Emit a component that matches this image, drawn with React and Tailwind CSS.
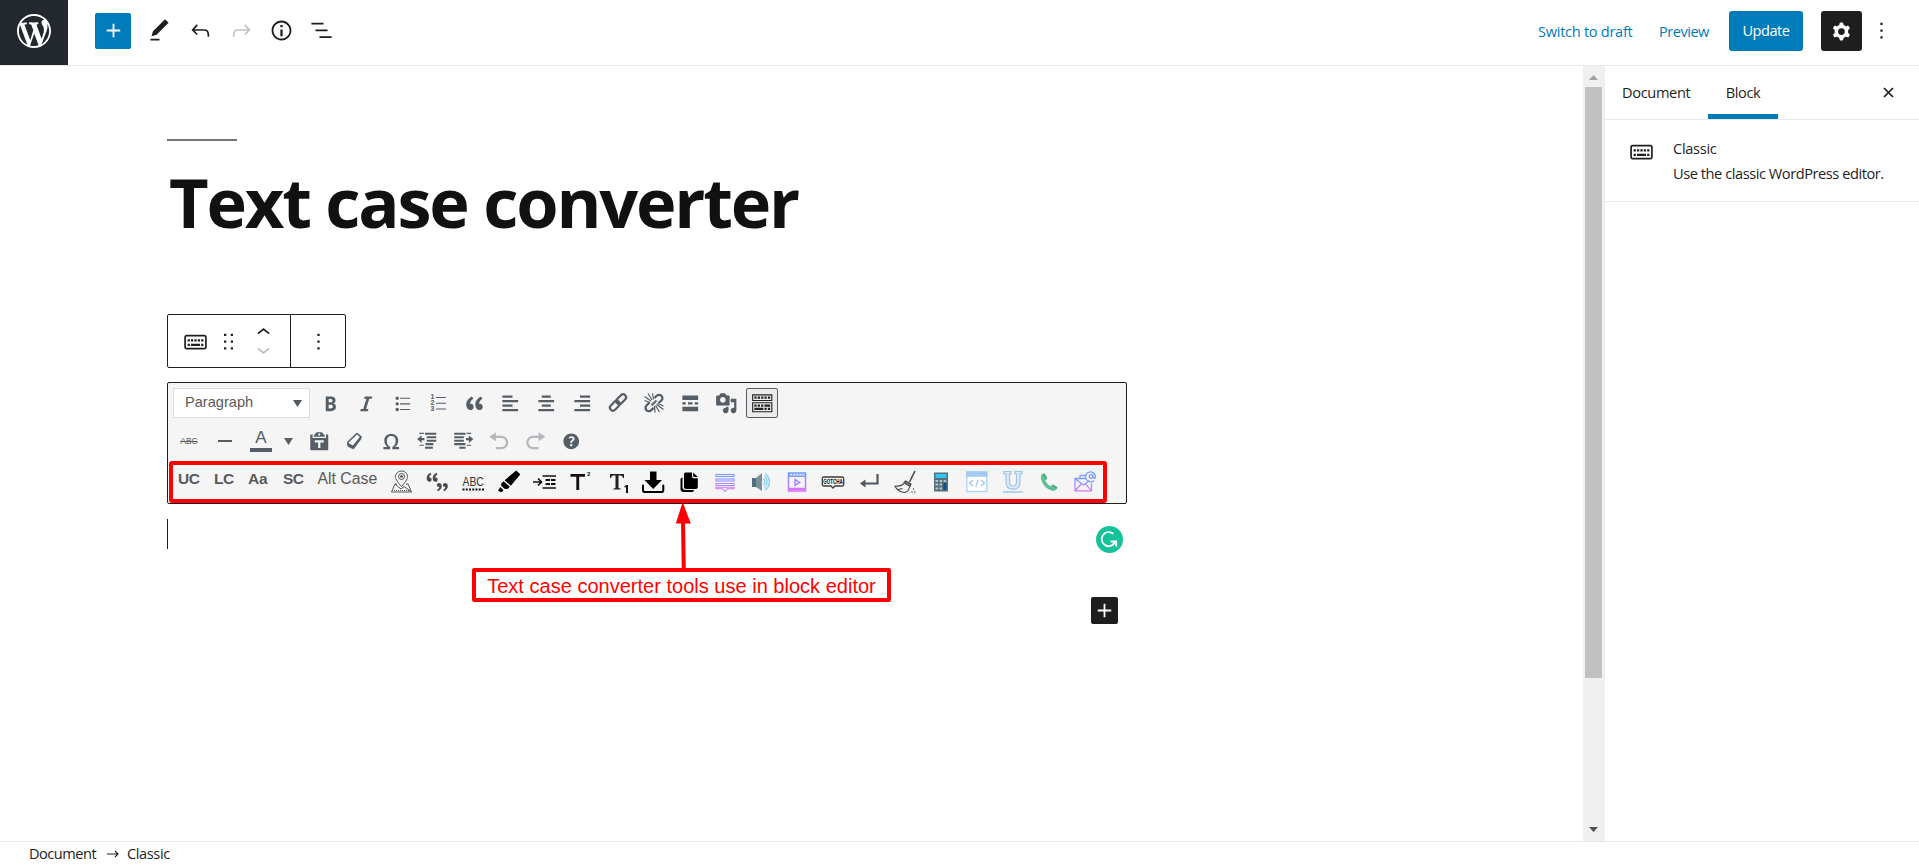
import React from "react";

const P = ({ d, size = 27, vb = "0 0 24 24", className = "" }) => (
  <svg width={size} height={size} viewBox={vb} className={"shrink-0 " + className} fill="currentColor" fillRule="evenodd">
    <path d={d} />
  </svg>
);

const wp =
  "M20 10c0-5.51-4.49-10-10-10C4.48 0 0 4.49 0 10c0 5.52 4.48 10 10 10 5.51 0 10-4.48 10-10zM7.78 15.37L4.37 6.22c.55-.02 1.17-.08 1.17-.08.5-.06.44-1.13-.06-1.11 0 0-1.45.11-2.37.11-.18 0-.37 0-.58-.01C4.12 2.69 6.87 1.11 10 1.11c2.33 0 4.45.87 6.05 2.34-.68-.11-1.65.39-1.65 1.58 0 .74.45 1.36.9 2.1.35.61.55 1.36.55 2.46 0 1.49-1.4 5-1.4 5l-3.03-8.37c.54-.02.82-.17.82-.17.5-.05.44-1.25-.06-1.22 0 0-1.44.12-2.38.12-.87 0-2.33-.12-2.33-.12-.5-.03-.56 1.2-.06 1.22l.92.08 1.26 3.41zM17.41 10c.24-.64.74-1.87.43-4.25.7 1.29 1.05 2.71 1.05 4.25 0 3.29-1.73 6.24-4.4 7.78.97-2.59 1.94-5.2 2.92-7.78zM6.1 18.09C3.12 16.65 1.11 13.53 1.11 10c0-1.3.23-2.48.72-3.59C3.25 10.3 4.67 14.2 6.1 18.09zm4.03-6.63l2.58 6.98c-.86.29-1.76.45-2.71.45-.79 0-1.57-.11-2.29-.33.81-2.38 1.62-4.74 2.42-7.1z";
const plus = "M18 11.2h-5.2V6h-1.6v5.2H6v1.6h5.2V18h1.6v-5.2H18z";
const pencil = "M20.1 5.1L16.9 2 6.2 12.7l-1.3 4.4 4.5-1.3L20.1 5.1zM4 20.8h8v-1.5H4v1.5z";
const undo =
  "M18.3 11.7c-.6-.6-1.4-.9-2.3-.9H6.7l2.9-3.3-1.1-1-4.5 5L8.5 16l1-1-2.7-2.7H16c.5 0 .9.2 1.3.5 1 1 1 3.4 1 4.5v.3h1.5v-.2c0-1.5 0-4.3-1.5-5.7z";
const redo =
  "M15.6 6.5l-1.1 1 2.9 3.3H8c-.9 0-1.7.3-2.3.9-1.4 1.5-1.4 4.2-1.4 5.6v.2h1.5v-.3c0-1.1 0-3.5 1-4.5.3-.3.7-.5 1.3-.5h9.2L14.5 15l1.1 1.1 4.6-4.6-4.6-5z";
const info =
  "M12 3.2c-4.8 0-8.8 3.9-8.8 8.8 0 4.8 3.9 8.8 8.8 8.8 4.8 0 8.8-3.9 8.8-8.8 0-4.8-4-8.8-8.8-8.8zm0 16c-4 0-7.2-3.3-7.2-7.2C4.8 8 8 4.8 12 4.8s7.2 3.3 7.2 7.2c0 4-3.2 7.2-7.2 7.2zM11 17h2v-6h-2v6zm0-8h2V7h-2v2z";
const outline = "M13.8 5.2H3v1.5h10.8V5.2zm-3.6 12v1.5H21v-1.5H10.2zm7.2-6H6.6v1.5h10.8v-1.5z";
const more = "M13 19h-2v-2h2v2zm0-6h-2v-2h2v2zm0-6h-2V5h2v2z";
const keyboard =
  "M20 6H4c-1.1 0-2 .9-2 2v9c0 1.1.9 2 2 2h16c1.1 0 2-.9 2-2V8c0-1.1-.9-2-2-2zm.5 11c0 .3-.2.5-.5.5H4c-.3 0-.5-.2-.5-.5V8c0-.3.2-.5.5-.5h16c.3 0 .5.2.5.5v9zM10 10H8v2h2v-2zm-5 2h2v-2H5v2zm8-2h-2v2h2v-2zm-5 6h8v-2H8v2zm6-4h2v-2h-2v2zm3 0h2v-2h-2v2zm0 4h2v-2h-2v2zM5 16h2v-2H5v2z";
const cog =
  "M10.289 4.836A1 1 0 0111.275 4h1.306a1 1 0 01.987.836l.244 1.466c.787.26 1.503.679 2.108 1.218l1.393-.522a1 1 0 011.216.437l.653 1.13a1 1 0 01-.23 1.273l-1.148.944a6.025 6.025 0 010 2.435l1.149.946a1 1 0 01.23 1.272l-.653 1.13a1 1 0 01-1.216.437l-1.394-.522c-.605.54-1.32.958-2.108 1.218l-.244 1.466a1 1 0 01-.987.836h-1.306a1 1 0 01-.986-.836l-.244-1.466a5.995 5.995 0 01-2.108-1.218l-1.394.522a1 1 0 01-1.217-.436l-.653-1.131a1 1 0 01.23-1.272l1.149-.946a6.026 6.026 0 010-2.435l-1.148-.944a1 1 0 01-.23-1.272l.653-1.131a1 1 0 011.217-.437l1.393.522a5.994 5.994 0 012.108-1.218l.244-1.466zM14.929 12a3 3 0 11-6 0 3 3 0 016 0z";
const chevUp = "M6.5 12.4L12 8l5.5 4.4-.9 1.2L12 10l-4.5 3.6-1-1.2z";
const chevDown = "M17.5 11.6L12 16l-5.5-4.4.9-1.2L12 14l4.5-3.6 1 1.2z";
const drag = "M8 7h2V5H8v2zm0 6h2v-2H8v2zm0 6h2v-2H8v2zm6-14v2h2V5h-2zm0 8h2v-2h-2v2zm0 6h2v-2h-2v2z";

const bold =
  "M6 4v13h4.54c1.37 0 2.46-.33 3.26-1 .8-.66 1.2-1.58 1.2-2.77 0-.84-.17-1.51-.51-2.01s-.9-.85-1.67-1.03v-.09c.57-.1 1.02-.4 1.36-.9s.51-1.13.51-1.91c0-1.14-.39-1.98-1.17-2.5C12.75 4.26 11.5 4 9.78 4H6zm2.57 5.15V6.26h1.36c.73 0 1.27.11 1.61.32.34.22.51.58.51 1.07 0 .54-.16.92-.47 1.15s-.82.35-1.51.35h-1.5zm0 2.19h1.6c1.44 0 2.16.53 2.16 1.61 0 .6-.17 1.05-.51 1.34s-.86.43-1.57.43H8.57v-3.38z";
const italic = "M14.78 6h-2.13l-2.8 9h2.12l-.62 2H4.6l.62-2h2.14l2.8-9H8.03l.62-2h6.75z";
const ul =
  "M5.5 7C4.67 7 4 6.33 4 5.5 4 4.68 4.67 4 5.5 4 6.32 4 7 4.68 7 5.5 7 6.33 6.32 7 5.5 7zM8 5h9v1H8V5zm-2.5 7c-.83 0-1.5-.67-1.5-1.5C4 9.68 4.67 9 5.5 9c.82 0 1.5.68 1.5 1.5 0 .83-.68 1.5-1.5 1.5zM8 10h9v1H8v-1zm-2.5 7c-.83 0-1.5-.67-1.5-1.5 0-.82.67-1.5 1.5-1.5.82 0 1.5.68 1.5 1.5 0 .83-.68 1.5-1.5 1.5zM8 15h9v1H8v-1z";
const quote =
  "M9.49 13.22c0-.74-.2-1.38-.61-1.9-.62-.78-1.83-.88-2.53-.72-.29-1.65 1.11-3.75 2.92-4.65L7.88 4c-2.73 1.3-5.42 4.28-4.96 8.05C3.21 14.43 4.59 16 6.54 16c.85 0 1.56-.25 2.12-.75s.83-1.18.83-2.03zm8.05 0c0-.74-.2-1.38-.61-1.9-.63-.78-1.83-.88-2.53-.72-.29-1.65 1.11-3.75 2.92-4.65L15.93 4c-2.73 1.3-5.41 4.28-4.95 8.05.29 2.38 1.66 3.95 3.61 3.95.85 0 1.56-.25 2.12-.75s.83-1.18.83-2.03z";
const alignLeft = "M12 5V3H3v2h9zm5 4V7H3v2h14zm-5 4v-2H3v2h9zm5 4v-2H3v2h14z";
const alignCenter = "M14 5V3H6v2h8zm3 4V7H3v2h14zm-3 4v-2H6v2h8zm3 4v-2H3v2h14z";
const alignRight = "M17 5V3H8v2h9zm0 4V7H3v2h14zm0 4v-2H8v2h9zm0 4v-2H3v2h14z";
const moreTag = "M17 7V3H3v4h14zM6 11V9H3v2h3zm6 0V9H8v2h4zm5 0V9h-3v2h3zm0 6v-4H3v4h14z";
const media =
  "M13 11V4c0-.55-.45-1-1-1h-1.67L9 1H5L3.67 3H2c-.55 0-1 .45-1 1v7c0 .55.45 1 1 1h10c.55 0 1-.45 1-1zM7 4.5c1.38 0 2.5 1.12 2.5 2.5S8.38 9.5 7 9.5 4.5 8.38 4.5 7 5.62 4.5 7 4.5zM14 6h5v10.5c0 1.38-1.12 2.5-2.5 2.5S14 17.88 14 16.5s1.12-2.5 2.5-2.5c.17 0 .34.02.5.05V9h-3V6zm-4 8.05V13h2v3.5c0 1.38-1.12 2.5-2.5 2.5S7 17.88 7 16.5 8.12 14 9.5 14c.17 0 .34.02.5.05z";
const sink =
  "M19 2v6H1V2h18zm-1 5V3H2v4h16zM5 4v2H3V4h2zm3 0v2H6V4h2zm3 0v2H9V4h2zm3 0v2h-2V4h2zm3 0v2h-2V4h2zm2 5v9H1V9h18zm-1 8v-7H2v7h16zM5 11v2H3v-2h2zm3 0v2H6v-2h2zm3 0v2H9v-2h2zm6 0v2h-5v-2h5zm-6 3v2H3v-2h8zm3 0v2h-2v-2h2zm3 0v2h-2v-2h2z";
const paste =
  "M12.38 2L15 5v1H5V5l2.64-3h4.74zM10 5c.55 0 1-.44 1-1 0-.55-.45-1-1-1s-1 .45-1 1c0 .56.45 1 1 1zm5.45-1H17c.55 0 1 .45 1 1v12c0 .56-.45 1-1 1H3c-.55 0-1-.44-1-1V5c0-.55.45-1 1-1h1.55L4 4.63V7h12V4.63zM14 11V9H6v2h3v5h2v-5h3z";
const omega =
  "M10 5.4c1.27 0 2.24.36 2.91 1.08.66.71 1 1.76 1 3.13 0 1.28-.23 2.37-.69 3.27-.47.89-1.27 1.52-2.22 2.12v2h6v-2h-3.69c.92-.64 1.62-1.34 2.12-2.34.49-1.01.74-2.13.74-3.35 0-1.78-.55-3.19-1.65-4.22S11.92 3.54 10 3.54s-3.43.53-4.52 1.57c-1.1 1.04-1.65 2.44-1.65 4.2 0 1.21.24 2.31.73 3.33.48 1.01 1.19 1.71 2.1 2.36H3v2h6v-2c-.98-.64-1.8-1.28-2.24-2.17-.45-.89-.67-1.96-.67-3.22 0-1.37.33-2.41 1-3.13C7.75 5.76 8.72 5.4 10 5.4z";
const undoArrow = "M12 5H7V2L1 6l6 4V7h5c2.2 0 4 1.8 4 4s-1.8 4-4 4H7v2h5c3.3 0 6-2.7 6-6s-2.7-6-6-6z";
const redoArrow = "M8 5h5V2l6 4-6 4V7H8c-2.2 0-4 1.8-4 4s1.8 4 4 4h5v2H8c-3.3 0-6-2.7-6-6s2.7-6 6-6z";
const help =
  "M17 10c0-3.87-3.14-7-7-7-3.87 0-7 3.13-7 7s3.13 7 7 7c3.86 0 7-3.13 7-7zm-6.3 1.48H9.14v-.43c0-.38.08-.7.24-.98s.46-.57.88-.89c.41-.29.68-.53.81-.71.14-.18.2-.39.2-.62 0-.25-.09-.44-.28-.58-.19-.13-.45-.19-.79-.19-.58 0-1.25.19-2 .57l-.64-1.28c.87-.49 1.8-.74 2.77-.74.81 0 1.45.2 1.92.58.48.39.71.91.71 1.55 0 .43-.09.8-.29 1.11-.19.32-.57.67-1.11 1.06-.38.28-.61.49-.71.63-.1.15-.15.34-.15.57v.35zm-1.47 2.74c-.18-.17-.27-.42-.27-.73 0-.33.08-.58.26-.75s.43-.25.77-.25c.32 0 .57.09.75.26s.27.42.27.74c0 .3-.09.55-.27.72-.18.18-.43.27-.75.27-.33 0-.58-.09-.76-.26z";
const outdent = "M1 8L5 4.800v2.200H7.500v2.200H5V11.500zM3 2.500h4v1H3zM3 13h4v1H3zM8 2.500h10v1.800H8zM9.500 5.500h8.500v1.900H9.500zM9.500 8.600h8.500v1.900H9.500zM8.500 11.600h7v1.900h-7zM8 14.800h7v1.800H8z";
const indent = "M19 8L15 4.800v2.200H12.500v2.200H15V11.500zM13 2.500h4v1h-4zM13 13h4v1h-4zM2 2.500h10v1.800H2zM2 5.500h8.500v1.900H2zM2 8.600h8.500v1.900H2zM2 11.600h10v1.900H2zM6.500 14.800h5.500v1.800H6.500z";

const D = ({ d, className }) => <P d={d} size={22.5} vb="0 0 20 20" className={className} />;
const Cell = ({ children, className = "" }) => (
  <div className={"flex h-9 w-9 shrink-0 items-center justify-center " + className}>{children}</div>
);
const S = ({ children, ...p }) => (
  <svg width="24" height="24" viewBox="0 0 24 24" fill="none" className="shrink-0 overflow-visible" {...p}>
    {children}
  </svg>
);
const HBtn = ({ d, className = "" }) => (
  <div className={"flex h-[41px] w-[40.5px] items-center justify-center " + className}>
    <P d={d} />
  </div>
);

const OrderedList = () => (
  <S>
    <path d="M10 6.5h10M10 12.300h10M10 18h10" stroke="currentColor" strokeWidth="1.100" />
    <g fill="currentColor" className="text-[7px] font-bold" fontFamily="Liberation Sans, sans-serif">
      <text x="4.500" y="8.400">1</text>
      <text x="4.500" y="14.400">2</text>
      <text x="4.500" y="20.400">3</text>
    </g>
  </S>
);
const Link = () => (
  <S stroke="currentColor" strokeWidth="2.200">
    <rect x="-5.600" y="-3" width="11.200" height="6" rx="3" transform="translate(15.200 8.200) rotate(-45)" />
    <rect x="-5.600" y="-3" width="11.200" height="6" rx="3" transform="translate(8.800 14.800) rotate(-45)" />
  </S>
);
const Unlink = () => (
  <S stroke="currentColor">
    <path d="M12.500 7l2.200-2.200a3.300 3.300 0 0 1 4.700 0 3.300 3.300 0 0 1 0 4.700L16.500 12M7.500 11.500l-3 3a3.300 3.300 0 0 0 0 4.700 3.300 3.300 0 0 0 4.700 0l2.500-2.500" strokeWidth="2.300" />
    <path d="M9 10L2.500 5.500M10 9L6 2.500M11.500 8.500L10.500 2.500M8 11.500L2.500 9.500M14.500 13.500l7 5M13.500 14.500l4 6.500M12.500 15l.5 6.500M15.500 12.500l6 2.500" strokeWidth="1.200" />
    <path d="M9.500 14.500l5-5" strokeWidth="1.800" />
  </S>
);

const Pin = () => (
  <S stroke="#555" strokeWidth="1">
    <path d="M12.500 16.500C9 12.500 6.500 9.500 6.500 6.500a6 5.500 0 0 1 12 0c0 3-2.500 6-6 10z" />
    <circle cx="12.500" cy="6.500" r="3" />
    <circle cx="12.500" cy="6.500" r="1" fill="#555" />
    <path d="M8 14H6l-3.500 8h20L19 14h-2M6 14l6 5 3-2.500 7 5" />
    <path d="M5 20.500h15" strokeDasharray="1 1" />
  </S>
);
const Quotes2 = () => (
  <S fill="#4a4a4a">
    <path d={quote} transform="translate(-.5 -.3) scale(.75)" />
    <path d={quote} transform="translate(25 24) rotate(180) scale(.75 .68)" />
  </S>
);
const AbcDots = () => (
  <S>
    <text fill="#333" fontSize="13" transform="translate(1.500 16) scale(.8 1)" fontFamily="Liberation Sans, sans-serif">ABC</text>
    <path d="M1.500 19.500h21.500" stroke="#111" strokeWidth="2" strokeDasharray="2 1.250" />
  </S>
);
const Marker = () => (
  <S fill="#000">
    <path d="M20 1.200l2.700 2.500c.5.500.4 1-.1 1.600l-8.800 10.500-6.200-5.600L18.300 1.300c.5-.5 1.100-.6 1.700-.1z" />
    <path d="M6.600 11.200l6.200 5.600-2.200 2.200-3.200-.2L4 15.600l.5-2.400z" />
    <path d="M3.200 17l3.200 3-1.600 2.300L1 21z" />
  </S>
);
const IndentArrow = () => (
  <S stroke="#111">
    <path d="M0 12h8M5 8.500l3.500 3.500L5 15.500" strokeWidth="1.700" />
    <path d="M9.500 6H23M9.500 18H23" strokeWidth="1.600" />
    <path d="M12.500 10H23M12.500 14H23" strokeWidth="1.800" strokeDasharray="4.500 1" />
  </S>
);
const Super = () => (
  <S fill="#111">
    <path d="M1.500 4h14.500v2.800h-5.800V20H7.300V6.800H1.500z" />
    <text x="18" y="5.500" fontSize="6" fontWeight="700" fontFamily="Liberation Sans, sans-serif">2</text>
  </S>
);
const Sub = () => (
  <S>
    <g transform="translate(2 0)">
      <path d="M3 4h14v4h-1.100c-.3-1.700-1-2.500-2.400-2.500h-2V17c0 1.200.5 1.500 2.200 1.600v1H6.300v-1C8 18.500 8.500 18.200 8.500 17V5.500h-2C5.100 5.500 4.400 6.300 4.100 8H3z" fill="#222" />
      <path d="M17.500 16l2.200-1h1.300v8h-2v-6l-1.500.6z" fill="#111" />
    </g>
  </S>
);
const Download = () => (
  <S fill="#000">
    <path d="M9 1.500h6.500V10H21l-8.800 9L3.500 10H9z" />
    <path d="M2 15.500v4.700c0 1.300.6 1.800 1.800 1.800h16.700c1.200 0 1.800-.5 1.800-1.800v-4.700" fill="none" stroke="#000" strokeWidth="2" strokeLinecap="round" />
  </S>
);
const Copy = () => (
  <S>
    <path d="M3.500 9.500a2 2 0 0 1 2-2V17a3 3 0 0 0 3 3H17c0 1.200-.8 2-2 2H6.500a3 3 0 0 1-3-3z" fill="#000" />
    <path d="M8.500 2.500H15v4c0 1 .7 1.800 1.800 1.800h4V17c0 1.200-.7 2-2 2H9c-1.300 0-2-.8-2-2V4.500c0-1.200.6-2 1.500-2z" fill="#000" />
    <path d="M16.200 2.500l4.600 4.600h-3.500c-.7 0-1.100-.4-1.100-1.100z" fill="#000" />
  </S>
);
const Comments = () => (
  <S strokeWidth="1.100">
    <rect x="3" y="4.500" width="18" height="2" stroke="#7f9dff" />
    <rect x="3" y="9" width="18" height="2" stroke="#9490ff" />
    <path d="M3 13.500h18v2H3z" stroke="#a988fb" />
    <path d="M3 18.800h6.500l2.500 2.700 2.500-2.700H21v-1.500H3z" stroke="#d07bfa" />
  </S>
);
const Speaker = () => (
  <S>
    <path d="M3 8h4v9H3z" fill="#52717e" />
    <path d="M7 8l6-5v18l-6-4z" fill="#78909c" />
    <path d="M14.500 9a4 4 0 0 1 0 6M15.500 6.500a7 7 0 0 1 0 11M16 4a9.500 9.500 0 0 1 0 16" stroke="#8fd3f2" strokeWidth="1.500" />
  </S>
);
const Video = () => (
  <S strokeWidth="1.500">
    <defs>
      <linearGradient id="vid" x1="0" y1="0" x2="0" y2="1">
        <stop offset="0" stopColor="#6f9bff" />
        <stop offset="1" stopColor="#dc72f8" />
      </linearGradient>
    </defs>
    <path d="M3.500 3h17v18h-17zM3.500 6.300h17M3.500 18.600h17M10 9.500v6l4.700-3z" stroke="url(#vid)" />
    <path d="M4 4.600h16" stroke="#7fa5ff" strokeDasharray="1.500 1.500" />
    <path d="M3.500 19.800h17" stroke="#dc72f8" />
  </S>
);
const Gotcha = () => (
  <S stroke="#3b3b3b">
    <path d="M3 7h18c1 0 1.700.6 1.700 1.600v5.800c0 1-.7 1.600-1.700 1.600h-7l-2 2-2-2H3c-1 0-1.700-.6-1.700-1.600V8.600C1.300 7.600 2 7 3 7z" strokeWidth="1.300" />
    <text fill="#111" stroke="none" fontSize="6.800" fontWeight="700" transform="translate(2.300 14) scale(.66 1)" fontFamily="Liberation Sans, sans-serif">GOTCHA</text>
  </S>
);
const Return = () => (
  <S>
    <path d="M20.500 4v9.500H7" stroke="#4f5660" strokeWidth="2.200" />
    <path d="M3 13.500l5.500-4v8z" fill="#4f5660" />
  </S>
);
const Broom = () => (
  <S stroke="#444" strokeWidth="1.100">
    <path d="M22 1L16.500 12" strokeWidth="1.600" />
    <path d="M12.500 11l5.500 3-1 2.500-6-3.800z" fill="#777" />
    <path d="M11 13.500c-2 2-5.500 2.800-9 2.800 1.500 3 5 6 10 6.200 2.500-1 4-3 4.500-5.500M5.500 19.500l4-1" />
    <path d="M18.500 22h1M21.500 22h1M20 19h1" strokeWidth="1.500" />
  </S>
);
const Calculator = () => (
  <S>
    <rect x="5" y="2.500" width="14" height="19" fill="#546e7a" />
    <rect x="6.500" y="4" width="11" height="4" fill="#35c3ef" />
    <path d="M6.500 10h2.600v2H6.500zM10.500 10h2.600v2h-2.600zM14.600 10h2.600v2h-2.600zM6.500 13.500h2.600v2H6.500zM10.500 13.500h2.600v2h-2.600zM6.500 17.500h2.600v2H6.500zM10.500 17.500h2.600v2h-2.600z" fill="#b4c6cf" />
    <path d="M14.400 13.300h3v6.500h-3z" fill="#0b4f8f" />
  </S>
);
const Code = () => (
  <S>
    <rect x="1.800" y="2" width="20" height="19.500" fill="#fff" stroke="#b5d3f2" strokeWidth="1.400" />
    <path d="M1.200 1.300h21.200v5.500H1.200z" fill="#a4caf2" />
    <path d="M8 10l-3.500 3 3.500 3M16 10l3.500 3-3.500 3M13.200 9.500l-2.400 7" stroke="#9fc6ee" strokeWidth="1.300" />
  </S>
);
const Under = () => (
  <S stroke="#9fc4e8" strokeWidth="1.200">
    <path d="M3 1.500h7v2.300H8.500V12c0 2.500 1.300 4 3.500 4s3.500-1.500 3.500-4V3.800H14V1.500h7v2.300h-2V12c0 4.500-2.500 7.200-7 7.200S5 16.500 5 12V3.800H3z" fill="#dcebf9" />
    <path d="M2 22h20" strokeWidth="1.500" />
  </S>
);
const Phone = () => (
  <S>
    <path d="M6.500 3.500C4.500 4 3.500 6 4 8.500c1.200 6 5.500 10.500 10.500 12 2.500.7 5-.2 5.800-2.200.3-.8.100-1.200-.5-1.600l-3.300-2c-.7-.4-1.200-.2-1.800.4l-1 1.200c-2.500-1.200-4.500-3.400-5.400-6l1.200-.9c.7-.5.9-1 .6-1.800L8.400 4.300c-.4-.8-.9-1-1.900-.8z" fill="#5fbf93" />
    <path d="M6 4l3.200 3.600M15.500 15.200l4.200 2.600" stroke="#3f8f6b" strokeWidth="1" />
  </S>
);
const Mail = () => (
  <S strokeWidth="1.300">
    <defs>
      <linearGradient id="mail" x1="0" y1="0" x2="0" y2="1">
        <stop offset="0" stopColor="#7a9cff" />
        <stop offset="1" stopColor="#d678f7" />
      </linearGradient>
    </defs>
    <path d="M13 8.500H2v12.300h16.500v-7.500M2.500 9l8 6 6-4.500M2.500 20.300l6-6.500M18 20.300l-5.500-6.500" stroke="url(#mail)" />
    <path d="M7 8V5.500h6" stroke="#8fa6ff" />
    <circle cx="18" cy="6.500" r="1.800" stroke="#7a9cff" />
    <path d="M21 10.500a5 5 0 1 1 1.500-3.800c0 2.200-2.400 2.200-2.600.2V4.800" stroke="#7a9cff" />
  </S>
);

const converters = [Pin, Quotes2, AbcDots, Marker, IndentArrow, Super, Sub, Download, Copy, Comments, Speaker, Video, Gotcha, Return, Broom, Calculator, Code, Under, Phone, Mail];

export default function App() {
  return (
    <div className="flex h-[867px] w-[1919px] flex-col overflow-hidden bg-white font-['Open_Sans',sans-serif] text-[14.6px] text-[#1e1e1e]">
      <header className="flex h-[66px] shrink-0 items-start border-b border-[#e7e8e9]">
        <div className="flex h-[65px] w-[68px] items-center justify-center bg-[#23282e] text-white">
          <P d={wp} size={34} vb="0 0 20 20" className="-mt-[3px]" />
        </div>
        <div className="ml-[27px] mt-[13px] flex h-9 w-9 items-center justify-center rounded-[2px] bg-[#007cba] text-white">
          <P d={plus} className="-mt-px" />
        </div>
        <div className="ml-[8px] mt-[10px] flex">
          <HBtn d={pencil} />
          <HBtn d={undo} className="ml-px" />
          <HBtn d={redo} className="text-[#c3c3c3]" />
          <HBtn d={info} />
          <HBtn d={outline} className="-ml-px" />
        </div>
        <div className="ml-auto flex pt-[11px]">
          <div className="flex h-[41px] w-[121px] items-center whitespace-nowrap tracking-[-0.29px] text-[#007cba]">Switch to draft</div>
          <div className="flex h-[41px] w-[70px] items-center tracking-[-0.5px] text-[#007cba]">Preview</div>
          <div className="flex h-10 w-[74px] items-center justify-center rounded-[3px] bg-[#007cba] tracking-[-0.5px] text-white">Update</div>
          <div className="ml-[18px] flex h-10 w-[41px] items-center justify-center rounded-[3px] bg-[#1e1e1e] text-white">
            <P d={cog} />
          </div>
          <div className="ml-[6px] mr-[24px] flex h-[39px] w-[27px] items-center justify-center">
            <P d={more} />
          </div>
        </div>
      </header>

      <div className="flex h-[775px] shrink-0">
        <main className="relative w-[1583px] pl-[167px] pt-[73px]">
          <div className="h-[2px] w-[70px] bg-[#767676]" />
          <h1 className="mt-[13px] h-[96px] whitespace-nowrap pl-[2px] text-[68.500px] leading-[96px] font-bold tracking-[-2.200px] text-[#111]">Text case converter</h1>

          <div className="mt-[64px] flex h-[54px] w-[179px] rounded-[2px] border border-[#1e1e1e]">
            <div className="flex w-[123px] items-center border-r border-[#1e1e1e] pl-[14px]">
              <P d={keyboard} />
              <P d={drag} className="ml-[6px]" />
              <div className="ml-[8px] flex flex-col">
                <P d={chevUp} className="-mb-[10px]" />
                <P d={chevDown} className="text-[#bbb]" />
              </div>
            </div>
            <div className="flex flex-1 items-center justify-center">
              <P d={more} />
            </div>
          </div>

          <div className="relative mt-[14px] h-[122px] w-[960px] rounded-[2px] border border-[#1e1e1e] bg-[#f5f5f5] pl-[5px] font-['Liberation_Sans',sans-serif] text-[#555d66]">
            <div className="flex h-[40px] items-center">
              <div className="mr-[2px] flex h-[30px] w-[137px] items-center justify-between border border-[#ddd] bg-white pl-[11px] pr-[7px] text-[14.600px] text-[#595959]">
                Paragraph
                <svg width="9" height="7" viewBox="0 0 9 7" fill="#50575e"><path d="M0 0h9L4.500 7z" /></svg>
              </div>
              <Cell><D d={bold} /></Cell>
              <Cell><D d={italic} /></Cell>
              <Cell><D d={ul} /></Cell>
              <Cell><OrderedList /></Cell>
              <Cell><D d={quote} /></Cell>
              <Cell><D d={alignLeft} /></Cell>
              <Cell><D d={alignCenter} /></Cell>
              <Cell><D d={alignRight} /></Cell>
              <Cell><Link /></Cell>
              <Cell><Unlink /></Cell>
              <Cell><D d={moreTag} /></Cell>
              <Cell><D d={media} /></Cell>
              <Cell>
                <div className="flex h-[30px] w-8 items-center justify-center rounded-[2px] border border-[#555d66] bg-[#ebebeb] text-[#222]">
                  <D d={sink} />
                </div>
              </Cell>
            </div>
            <div className="flex h-[36px] items-center">
              <Cell className="-ml-[2px]">
                <span className="text-[8.500px] line-through">ABC</span>
              </Cell>
              <Cell><div className="h-[2px] w-[14px] bg-[#555d66]" /></Cell>
              <Cell className="w-[36px] flex-col">
                <span className="text-[17px] leading-[16px]">A</span>
                <div className="mt-[2px] h-[4px] w-[22px] bg-[#555d66]" />
              </Cell>
              <div className="flex w-[18px] justify-center">
                <svg width="9" height="7" viewBox="0 0 9 7" fill="#555d66"><path d="M0 0h9L4.500 7z" /></svg>
              </div>
              <div className="w-[4px]" />
              <Cell><D d={paste} /></Cell>
              <Cell>
                <S stroke="currentColor" strokeWidth="1.600">
                  <path d="M14 4.500l4 3.300-8 10.200-5.200-2.300L5 13z" strokeLinejoin="round" />
                  <path d="M5 14l5 3 8-9.500v2.500L10.500 20 5 17.500z" fill="currentColor" strokeWidth=".6" />
                </S>
              </Cell>
              <Cell><D d={omega} /></Cell>
              <Cell><D d={outdent} /></Cell>
              <Cell><D d={indent} /></Cell>
              <Cell className="text-[#b4b8bc]"><D d={undoArrow} /></Cell>
              <Cell className="text-[#b4b8bc]"><D d={redoArrow} /></Cell>
              <Cell><D d={help} /></Cell>
            </div>
            <div className="flex h-[46px] items-center pl-[5px] text-[15.800px] text-[#595959]">
              <div className="-mt-[7px] flex whitespace-nowrap">
                <b className="w-[36px] text-[15.500px] tracking-[-0.500px]">UC</b>
                <b className="w-[34px] text-[15.500px] tracking-[-0.500px]">LC</b>
                <b className="w-[35px] text-[15.500px] tracking-[-0.200px]">Aa</b>
                <b className="w-[34.500px] text-[15.500px] tracking-[-0.700px]">SC</b>
                <span className="w-[65.500px]">Alt Case</span>
              </div>
              {converters.map((Icon, i) => (
                <Cell key={i}><Icon /></Cell>
              ))}
            </div>
            <div className="absolute left-px top-[78px] h-[42px] w-[938px] rounded-[3px] border-4 border-[#ff0000]" />
          </div>

          <div className="relative mt-[15px] flex h-[30px] w-[960px] justify-between">
            <div className="w-px bg-[#1e1e1e]" />
            <svg width="27" height="27" viewBox="0 0 27 27" fill="none" className="mr-[4px] mt-[7px]">
              <circle cx="13.500" cy="13.500" r="13.500" fill="#15c39a" />
              <path d="M17.800 8.300a7 7 0 1 0 2 7.600M15 16h5.700v5" stroke="#fff" strokeWidth="1.800" transform="translate(-.5 -.5)" />
            </svg>
          </div>
          <div className="mt-[48px] flex w-[951px] justify-end">
            <div className="flex h-[27px] w-[27px] items-center justify-center rounded-[2px] bg-[#1e1e1e] text-white">
              <P d={plus} />
            </div>
          </div>

          <svg width="20" height="70" viewBox="0 0 20 70" className="absolute left-[673px] top-[435px]">
            <path d="M9.700 1L17.800 22.500H2.800z" fill="#f00" />
            <path d="M10 20l.8 50" stroke="#f00" strokeWidth="4" />
          </svg>
          <div className="absolute left-[472px] top-[502px] flex h-[34px] w-[419px] items-center justify-center rounded-[2px] border-4 border-[#ff0000] bg-white pt-[2px] font-['Liberation_Sans',sans-serif] text-[20.050px] whitespace-nowrap text-[#ff0000]">
            Text case converter tools use in block editor
          </div>
        </main>

        <div className="flex w-[22px] flex-col items-center bg-[#f0f0f0] pr-px">
          <svg width="9" height="5" viewBox="0 0 9 5" fill="#a0a0a0" className="mt-[9px]"><path d="M0 5h9L4.500 0z" /></svg>
          <div className="mt-[7px] h-[591px] w-[17px] bg-[#c1c1c1]" />
          <svg width="9" height="5" viewBox="0 0 9 5" fill="#505050" className="mb-[9px] mt-auto"><path d="M0 0h9L4.500 5z" /></svg>
        </div>

        <aside className="w-[314px]">
          <div className="flex h-[54px] border-b border-[#e7e8e9]">
            <div className="flex w-[103px] items-center pl-[17px] tracking-[-0.350px]">Document</div>
            <div className="flex w-[70px] items-center justify-center border-b-[5px] border-[#007cba] pt-[5px] tracking-[-0.400px]">Block</div>
            <div className="ml-auto flex w-[62px] items-center justify-center">
              <svg width="11" height="11" viewBox="0 0 11 11" stroke="#1e1e1e" strokeWidth="1.700"><path d="M1 1l9 9M10 1l-9 9" /></svg>
            </div>
          </div>
          <div className="flex h-[82px] border-b border-[#e7e8e9] pt-[17px]">
            <P d={keyboard} className="ml-[23px] mt-px" />
            <div className="ml-[18px] whitespace-nowrap">
              <div className="leading-[22px] tracking-[-0.300px]">Classic</div>
              <div className="mt-[3px] leading-[22px] tracking-[-0.440px]">Use the classic WordPress editor.</div>
            </div>
          </div>
        </aside>
      </div>

      <footer className="flex flex-1 items-center border-t border-[#e7e8e9] pb-px pl-[29px]">
        <span className="w-[78px] tracking-[-0.500px]">Document</span>
        <svg width="12" height="8" viewBox="0 0 12 8" fill="none" stroke="#1e1e1e" strokeWidth="1.100"><path d="M0 4h11M8 1l3 3-3 3" /></svg>
        <span className="ml-[8px] tracking-[-0.400px]">Classic</span>
      </footer>
    </div>
  );
}
